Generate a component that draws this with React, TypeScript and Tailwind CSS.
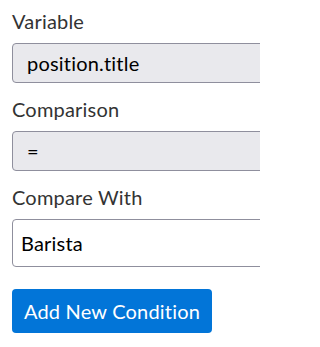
export default function App() {
  return (
    <div className="w-[260px] h-[347px] overflow-hidden bg-white pt-2 pl-3 font-['Lato','Noto_Sans',sans-serif] tracking-[0.2px]">
      <div className="w-[280px]">
        <label className="block text-[20px] leading-[27px] text-[#333] mb-2">Variable</label>
        <div className="h-10 border border-[#8f8f9d] rounded bg-[#e9e9ed] flex items-center pl-[14px] text-[20px] text-black">
          position.title
        </div>
        <label className="block text-[20px] leading-[27px] text-[#333] mt-[13px] mb-2">Comparison</label>
        <div className="h-10 border border-[#8f8f9d] rounded bg-[#e9e9ed] flex items-center pl-[14px] text-[20px] text-black">
          =
        </div>
        <label className="block text-[20px] leading-[27px] text-[#333] mt-[13px] mb-2">Compare With</label>
        <div className="h-12 border border-[#8f8f9d] rounded bg-white flex items-center pl-2 text-[20px] text-black">
          Barista
        </div>
        <button className="mt-[22px] h-11 w-[200px] rounded bg-[#0275d8] text-white text-[20px]">
          Add New Condition
        </button>
      </div>
    </div>
  );
}
